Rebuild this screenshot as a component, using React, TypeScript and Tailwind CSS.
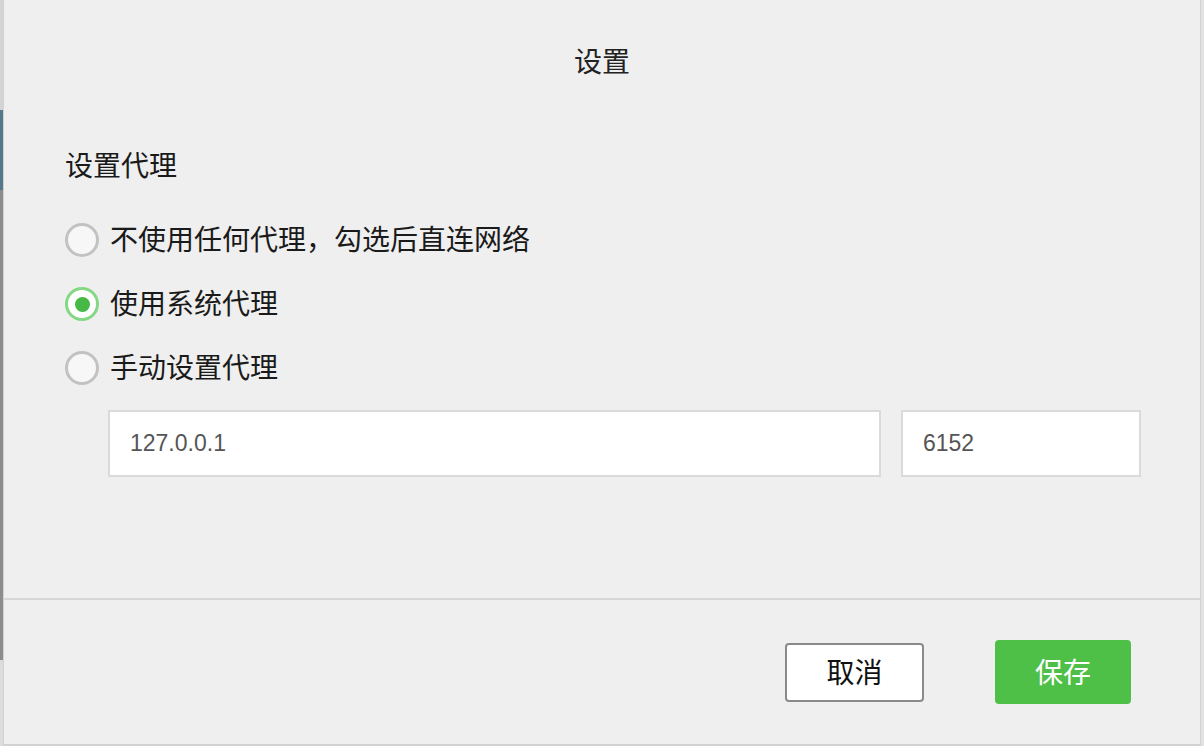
import { useState } from "react";

const cjk = { fontFamily: '"Noto Sans CJK SC", "Noto Sans", sans-serif' };

type Option = { id: string; label: string };

const options: Option[] = [
  { id: "none", label: "不使用任何代理，勾选后直连网络" },
  { id: "system", label: "使用系统代理" },
  { id: "manual", label: "手动设置代理" },
];

function Radio({ checked }: { checked: boolean }) {
  if (checked) {
    return (
      <span className="flex h-[34px] w-[34px] items-center justify-center rounded-full border-[3px] border-[#84d884] bg-white">
        <span className="h-[15px] w-[15px] rounded-full bg-[#45b845]" />
      </span>
    );
  }
  return <span className="h-[34px] w-[34px] rounded-full border-[3px] border-[#c2c2c2] bg-[#f7f7f7]" />;
}

export default function App() {
  const [mode, setMode] = useState("system");
  const [host, setHost] = useState("127.0.0.1");
  const [port, setPort] = useState("6152");

  return (
    <div className="flex h-[746px] w-[1204px] overflow-hidden bg-[#efefef]" style={cjk}>
      {/* bits of the window behind */}
      <div className="flex w-[3px] flex-col">
        <div className="h-[110px] bg-[#d4d4d4]" />
        <div className="h-[80px] bg-[#55798a]" />
        <div className="h-[470px] bg-[#8c8c8c]" />
        <div className="flex-1 bg-[#dcdcdc]" />
      </div>

      <div className="flex flex-1 flex-col border-x border-b-2 border-[#d2d2d2] bg-[#efefef]">
        <div className="pt-[40px] text-center text-[28px] leading-[40px] text-[#222]">设置</div>

        <div className="flex flex-col pl-[61px] pr-[59px]">
          <div className="mt-[64px] text-[28px] leading-[40px] text-[#1a1a1a]">设置代理</div>

          <div className="mt-[24px] flex flex-col">
            {options.map((o) => (
              <label key={o.id} className="flex h-[64px] cursor-pointer items-center gap-[11px]" onClick={() => setMode(o.id)}>
                <Radio checked={mode === o.id} />
                <span className="pb-[4px] text-[28px] leading-[40px] text-[#1a1a1a]">{o.label}</span>
              </label>
            ))}
          </div>

          <div className="ml-[43px] mt-[10px] flex gap-[20px]">
            <input
              value={host}
              onChange={(e) => setHost(e.target.value)}
              className="h-[67px] flex-1 border-2 border-[#dadada] bg-white px-[20px] text-[23px] text-[#555] outline-none"
              style={{ fontFamily: '"Liberation Sans", Arial, sans-serif' }}
            />
            <input
              value={port}
              onChange={(e) => setPort(e.target.value)}
              className="h-[67px] w-[240px] border-2 border-[#dadada] bg-white px-[20px] text-[23px] text-[#555] outline-none"
              style={{ fontFamily: '"Liberation Sans", Arial, sans-serif' }}
            />
          </div>
        </div>

        <div className="flex-1" />

        <div className="border-t-2 border-[#d6d6d6]" />
        <div className="flex h-[144px] items-center justify-end gap-[71px] pr-[69px]">
          <button className="h-[59px] w-[139px] rounded-[4px] border-2 border-[#8a8a8a] bg-white pb-[3px] text-[28px] text-[#111]">
            取消
          </button>
          <button className="h-[64px] w-[136px] rounded-[4px] bg-[#4fc047] pb-[3px] text-[28px] text-white">保存</button>
        </div>
      </div>

      <div className="w-[3px] bg-[#e2e2e2]" />
    </div>
  );
}
